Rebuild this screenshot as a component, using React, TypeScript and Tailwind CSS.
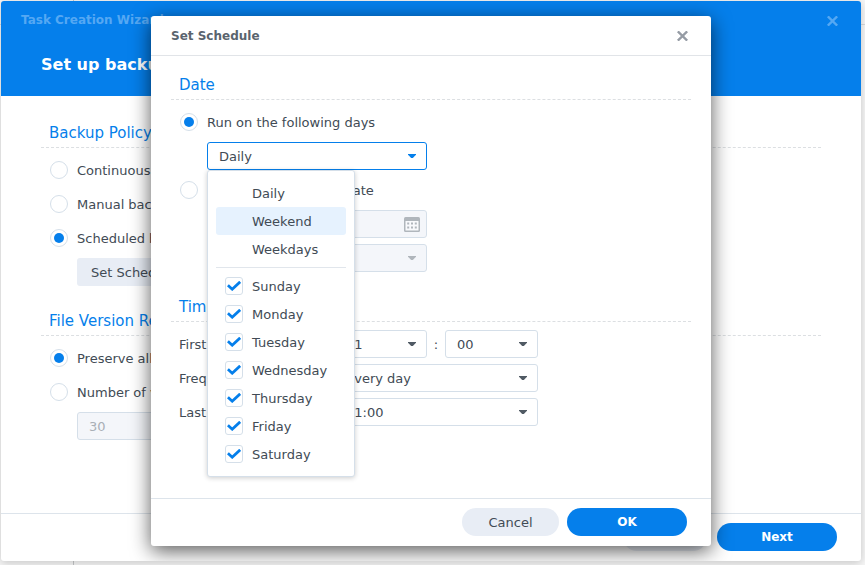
import { useState } from "react";
import type { ReactNode } from "react";

const DAYS = ["Sunday", "Monday", "Tuesday", "Wednesday", "Thursday", "Friday", "Saturday"];
const PRESETS = ["Daily", "Weekend", "Weekdays"];

function CloseIcon() {
  return (
    <svg viewBox="0 0 11 10" className="h-[10px] w-[11px]" fill="none" stroke="currentColor" strokeWidth="2.4">
      <path d="M.8.4l9.4 9.2M10.2.4L.8 9.6" />
    </svg>
  );
}

function CalendarIcon() {
  return (
    <svg viewBox="0 0 16 15" className="h-[15px] w-4" fill="#b0b6bc">
      <rect width="16" height="15" rx="1.5" />
      <rect x="1.5" y="4" width="13" height="9.5" fill="#f8f9fc" />
      <path d="M3.2 5.6h2v2h-2zM7 5.6h2v2H7zM10.8 5.6h2v2h-2zM3.2 9.6h2v2h-2zM7 9.6h2v2H7zM10.8 9.6h2v2h-2z" />
    </svg>
  );
}

function Section({ title, children }: { title: string; children: ReactNode }) {
  return (
    <section>
      <h3 className="mb-2 h-7 border-b border-dashed border-[#dcdfe2] pl-2 text-[15px] leading-[26px] text-[#057feb]">{title}</h3>
      <div className="flex flex-col gap-[6px] px-2">{children}</div>
    </section>
  );
}

function Radio({ name, label, checked = false }: { name: string; label: string; checked?: boolean }) {
  return (
    <label className="flex h-7 items-center gap-2 whitespace-nowrap">
      <input
        type="radio"
        name={name}
        defaultChecked={checked}
        className="mx-px my-0 grid size-[18px] shrink-0 appearance-none place-items-center rounded-full border border-[#d5dfe9] bg-white before:size-[10px] before:rounded-full checked:before:bg-[#057feb]"
      />
      {label}
    </label>
  );
}

function Select({
  id,
  label,
  options,
  className = "",
  active = false,
  disabled = false,
}: {
  id: string;
  label?: string;
  options: string[];
  className?: string;
  active?: boolean;
  disabled?: boolean;
}) {
  const tone = active
    ? "border-[#057feb] bg-white"
    : disabled
      ? "border-[#d5dfe9] bg-[#f4f6fa] text-[#a9afb6]"
      : "border-[#d5dfe9] bg-white";
  const arrow = active ? "text-[#057feb]" : disabled ? "text-[#b0b6bc]" : "text-[#505a64]";
  return (
    <div className={`grid items-center ${className}`}>
      <select
        id={id}
        aria-label={label}
        disabled={disabled}
        className={`col-start-1 row-start-1 h-7 w-full appearance-none rounded-[3px] border pt-px pl-[11px] opacity-100 outline-none ${tone}`}
      >
        {options.map((option) => (
          <option key={option}>{option}</option>
        ))}
      </select>
      <svg viewBox="0 0 8 4" className={`pointer-events-none col-start-1 row-start-1 mr-[11px] h-1 w-2 justify-self-end ${arrow}`} fill="currentColor">
        <path d="M0 0h8v.7L4.8 4H3.2L0 .7z" />
      </svg>
    </div>
  );
}

function ScheduleMenu() {
  const [days, setDays] = useState<string[]>(DAYS);
  const toggle = (day: string) =>
    setDays((current) => (current.includes(day) ? current.filter((d) => d !== day) : [...current, day]));
  return (
    <div className="absolute top-full left-0 z-10 w-[148px] rounded-[3px] border border-[#d5dfe9] bg-white px-2 py-2 shadow-[0_1px_5px_rgba(0,0,0,0.2)]">
      {PRESETS.map((preset) => (
        <button
          key={preset}
          type="button"
          className={`block h-7 w-full rounded-[3px] pl-9 text-left ${preset === "Weekend" ? "bg-[#e6f2fe]" : ""}`}
        >
          {preset}
        </button>
      ))}
      <hr className="mt-1 mb-1 border-[#e1e6ec]" />
      {DAYS.map((day) => (
        <label key={day} className="flex h-7 items-center gap-[9px] pl-[9px]">
          <span className="grid size-[18px] place-items-center">
            <input
              type="checkbox"
              checked={days.includes(day)}
              onChange={() => toggle(day)}
              className="peer col-start-1 row-start-1 m-0 size-[18px] appearance-none rounded-[3px] border border-[#d5dfe9] bg-white"
            />
            <svg viewBox="0 0 14 10" className="pointer-events-none col-start-1 row-start-1 hidden h-[10px] w-[14px] peer-checked:block" fill="none" stroke="#057feb" strokeWidth="2.8">
              <path d="M.9 4.2l4.3 4L13.2.8" />
            </svg>
          </span>
          {day}
        </label>
      ))}
    </div>
  );
}

function ScheduleDialog() {
  return (
    <div
      role="dialog"
      aria-label="Set Schedule"
      className="w-full max-w-[560px] rounded-[3px] bg-white shadow-[0_5px_20px_rgba(0,0,0,0.65)]"
    >
      <header className="flex h-10 items-center justify-between border-b border-[#e1e4e8] pr-[23px] pl-5">
        <h2 className="text-xs font-bold text-[#5a646e]">Set Schedule</h2>
        <button type="button" aria-label="Close schedule" className="text-[#969ca5]">
          <CloseIcon />
        </button>
      </header>
      <div className="flex flex-col gap-[22px] px-5 pt-4 pb-[72px]">
        <Section title="Date">
          <Radio name="date-mode" label="Run on the following days" checked />
          <div className="relative ml-7 w-[220px]">
            <Select id="days" label="Days" options={PRESETS} active />
            <ScheduleMenu />
          </div>
          <Radio name="date-mode" label="Run on the following date" />
          <div className="ml-7 grid w-[220px] items-center">
            <input
              type="text"
              aria-label="Date"
              disabled
              className="col-start-1 row-start-1 h-7 w-full rounded-[3px] border border-[#d5dfe9] bg-[#f4f6fa] px-[11px]"
            />
            <span className="col-start-1 row-start-1 mr-[7px] justify-self-end">
              <CalendarIcon />
            </span>
          </div>
          <Select id="repeat" label="Repeat" options={[""]} className="ml-7 w-[220px]" disabled />
        </Section>
        <Section title="Time">
          <div className="flex items-center">
            <label htmlFor="first" className="w-[155px]">First run time:</label>
            <Select id="first" options={["11"]} className="w-[93px]" />
            <span className="w-[18px] text-center">:</span>
            <Select id="minute" label="Minute" options={["00"]} className="w-[93px]" />
          </div>
          <div className="flex items-center">
            <label htmlFor="frequency" className="w-[155px]">Frequency:</label>
            <Select id="frequency" options={["Every day"]} className="w-[204px]" />
          </div>
          <div className="flex items-center">
            <label htmlFor="last" className="w-[155px]">Last run time:</label>
            <Select id="last" options={["11:00"]} className="w-[204px]" />
          </div>
        </Section>
      </div>
      <footer className="flex justify-end gap-2 border-t border-[#dde4eb] pt-[9px] pr-6 pb-[10px]">
        <button type="button" className="h-7 w-[97px] rounded-full bg-[#e8edf5]">Cancel</button>
        <button type="button" className="h-7 w-[120px] rounded-full bg-[#057feb] text-xs font-bold text-white">OK</button>
      </footer>
    </div>
  );
}

export default function App() {
  return (
    <div className="relative flex min-h-screen bg-[#f6f6f6] pt-px pr-1 pb-1 pl-px font-['DejaVu_Sans',Verdana,sans-serif] text-[13px] leading-[21px] text-[#414b55]">
      <div className="absolute inset-x-0 top-6 border-t border-[#d8dadc]" />
      <div className="absolute inset-y-0 left-[73px] border-l border-[#c4c6c8]" />
      <main className="relative flex flex-1 flex-col overflow-hidden rounded-[3px] bg-white shadow-[0_2px_10px_rgba(0,0,0,0.2)]">
        <header className="h-[95px] bg-[#057feb] pt-[9px] pr-[23px] pl-5">
          <div className="flex items-center justify-between text-[#55a8f3]">
            <h1 className="text-xs leading-[21px] font-bold">Task Creation Wizard</h1>
            <button type="button" aria-label="Close wizard">
              <CloseIcon />
            </button>
          </div>
          <h2 className="mt-[22px] pl-5 text-base leading-6 font-bold text-white">Set up backup schedule</h2>
        </header>
        <div className="flex flex-1 flex-col gap-[22px] px-10 pt-6">
          <Section title="Backup Policy">
            <Radio name="policy" label="Continuous backup" />
            <Radio name="policy" label="Manual backup" />
            <Radio name="policy" label="Scheduled backup" checked />
            <button type="button" className="ml-7 h-7 self-start rounded-[3px] bg-[#e8edf5] px-[14px]">Set Schedule</button>
          </Section>
          <Section title="File Version Retention">
            <Radio name="retention" label="Preserve all versions" checked />
            <Radio name="retention" label="Number of versions" />
            <input
              type="text"
              aria-label="Number of versions"
              defaultValue="30"
              disabled
              className="ml-7 h-7 w-[220px] rounded-[3px] border border-[#d5dfe9] bg-[#f4f6fa] px-[11px] text-[#a9afb6]"
            />
          </Section>
        </div>
        <footer className="flex justify-end gap-[10px] border-t border-[#dde4eb] pt-[9px] pr-6 pb-[10px]">
          <button type="button" className="h-7 w-[84px] rounded-full bg-[#e8edf5]">Back</button>
          <button type="button" className="h-7 w-[120px] rounded-full bg-[#057feb] text-xs font-bold text-white">Next</button>
        </footer>
        <div className="absolute inset-0 flex items-center justify-center">
          <ScheduleDialog />
        </div>
      </main>
    </div>
  );
}
